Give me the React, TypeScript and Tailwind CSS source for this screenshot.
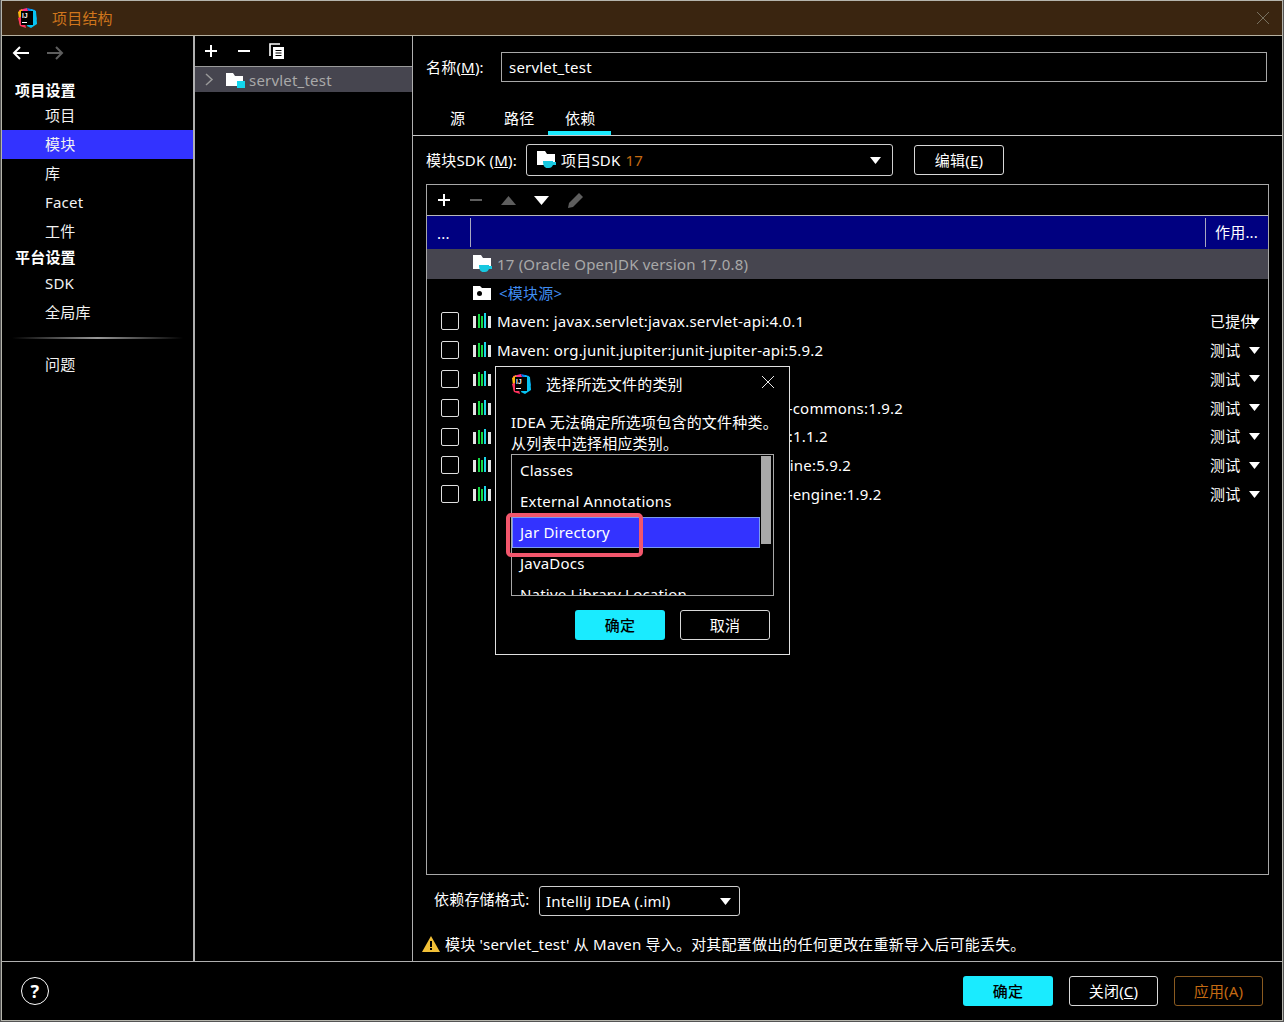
// App.tsx
import React from "react";

const Logo = ({ size = 20 }: { size?: number }) => (
  <svg width={size} height={size} viewBox="0 0 20 20" className="shrink-0">
    <polygon points="2,2 10,0 12,6 3,8" fill="#ff318c" />
    <polygon points="10,0 18,2 20,12 14,8" fill="#087cfa" />
    <polygon points="14,1 19,3 20,16 14,20 10,18" fill="#07c3f2" />
    <polygon points="1,4 5,1 7,10 3,18" fill="#fdb60d" />
    <polygon points="1,10 6,8 9,20 3,18" fill="#fe315d" />
    <rect x="4" y="3" width="12" height="14" fill="#000" />
    <text x="5" y="10" fontSize="6.5" fontWeight="700" fill="#fff" fontFamily="Liberation Sans">IJ</text>
    <rect x="5" y="14" width="5" height="1" fill="#fff" />
  </svg>
);

const SdkFolder = () => (
  <svg width="20" height="18" viewBox="0 0 20 18" className="shrink-0">
    <path d="M0 0h8l2 3h8v11H0z" fill="#fff" />
    <path d="M6 10h10v1h3v3h-3c-1 2-2 3-4 3h-2c-2 0-4-2-4-7z" fill="#18c8e0" />
  </svg>
);

const SourceFolder = () => (
  <svg width="18" height="14" viewBox="0 0 18 14" className="shrink-0">
    <path d="M0 0h7l2 2h9v12H0z" fill="#fff" />
    <circle cx="6.5" cy="7.5" r="2.5" fill="#000" />
  </svg>
);

const MavenIcon = () => (
  <svg width="19" height="16" viewBox="0 0 19 16" className="shrink-0">
    <rect x="0" y="3" width="3" height="12" fill="#e6e6e6" />
    <rect x="5" y="1" width="2" height="14" fill="#14d944" />
    <rect x="8" y="3" width="2" height="12" fill="#14d944" />
    <rect x="11" y="0" width="2" height="15" fill="#1ad6e8" />
    <rect x="15" y="3" width="3" height="12" fill="#e6e6e6" />
  </svg>
);

const Triangle = ({ color = "#fff", up = false }: { color?: string; up?: boolean }) => (
  <svg width="15" height="9" viewBox="0 0 15 9" className="shrink-0">
    <polygon points={up ? "7.5,0 15,9 0,9" : "0,0 15,0 7.5,9"} fill={color} />
  </svg>
);

const SmallArrow = () => (
  <svg width="11" height="7" viewBox="0 0 11 7" className="shrink-0">
    <polygon points="0,0 11,0 5.5,7" fill="#fff" />
  </svg>
);

const Plus = ({ color = "#fff" }: { color?: string }) => (
  <svg width="14" height="14" viewBox="0 0 14 14" className="shrink-0">
    <path d="M7 1v12M1 7h12" stroke={color} strokeWidth="2" />
  </svg>
);

const Minus = ({ color = "#fff" }: { color?: string }) => (
  <svg width="14" height="14" viewBox="0 0 14 14" className="shrink-0">
    <path d="M1 7h12" stroke={color} strokeWidth="2" />
  </svg>
);

const Arrow = ({ color, flip }: { color: string; flip?: boolean }) => (
  <svg width="18" height="14" viewBox="0 0 18 14" className={flip ? "shrink-0 rotate-180" : "shrink-0"}>
    <path d="M17 7H2M8 1 2 7l6 6" stroke={color} strokeWidth="2" fill="none" />
  </svg>
);

const deps = [
  { name: "Maven: javax.servlet:javax.servlet-api:4.0.1", scope: "已提供" },
  { name: "Maven: org.junit.jupiter:junit-jupiter-api:5.9.2", scope: "测试" },
  { name: "Maven: org.opentest4j:opentest4j:1.2.0", scope: "测试" },
  { name: "Maven: org.junit.platform:junit-platform-commons:1.9.2", scope: "测试" },
  { name: "Maven: org.apiguardian:apiguardian-api:1.1.2", scope: "测试" },
  { name: "Maven: org.junit.jupiter:junit-jupiter-engine:5.9.2", scope: "测试" },
  { name: "Maven: org.junit.platform:junit-platform-engine:1.9.2", scope: "测试" },
];

const NavItem = ({ label, active }: { label: string; active?: boolean }) => (
  <div className={`h-[29px] flex items-center pl-[43px] text-[#f2f2f2] ${active ? "bg-[#3333ff]" : ""}`}>{label}</div>
);

export default function App() {
  return (
    <div className="w-[1284px] h-[1022px] bg-[#555] overflow-hidden relative font-['Noto_Sans','Noto_Sans_CJK_SC',sans-serif] text-[15px] tracking-[0.2px] text-white">
      <div className="ml-px mr-[1px] mt-0 h-[1021px] border border-[#b5b5ad] bg-black flex flex-col">
        {/* title bar */}
        <div className="h-[34px] shrink-0 bg-[#3a2510] border-b border-[#b5b0a0] flex items-center pl-[15px] pr-[12px] box-content">
          <Logo />
          <span className="ml-[15px] text-[#d0761c]">项目结构</span>
          <svg width="14" height="14" viewBox="0 0 14 14" className="ml-auto">
            <path d="M1 1l12 12M13 1 1 13" stroke="#77705f" strokeWidth="1" />
          </svg>
        </div>

        <div className="flex-1 flex min-h-0">
          {/* sidebar */}
          <div className="w-[191px] shrink-0 border-r-2 border-[#b0b0b0] box-content">
            <div className="h-[34px] flex items-center gap-[16px] pl-[10px]">
              <Arrow color="#ffffff" />
              <Arrow color="#5e5e5e" flip />
            </div>
            <div className="h-[10px]" />
            <div className="h-[21px] flex items-center pl-[13px] font-bold">项目设置</div>
            <NavItem label="项目" />
            <NavItem label="模块" active />
            <NavItem label="库" />
            <NavItem label="Facet" />
            <NavItem label="工件" />
            <div className="h-[23px] flex items-center pl-[13px] font-bold">平台设置</div>
            <NavItem label="SDK" />
            <NavItem label="全局库" />
            <div className="h-[2px] mx-[10px] mt-[10px] mb-[11px] bg-gradient-to-r from-transparent via-[#999] to-transparent" />
            <NavItem label="问题" />
          </div>

          {/* module tree */}
          <div className="w-[217px] shrink-0 border-r border-[#b0b0b0] box-content">
            <div className="h-[30px] flex items-center gap-[19px] pl-[9px] border-b border-[#9a9a9a] box-content">
              <Plus />
              <Minus />
              <svg width="16" height="16" viewBox="0 0 16 16" className="shrink-0 ml-[-1px]">
                <path d="M1 13V1h10" stroke="#fff" strokeWidth="1.6" fill="none" />
                <path d="M4 4h11v12H4z" fill="#fff" />
                <path d="M6.5 7.5h6M6.5 10h6M6.5 12.500h6" stroke="#000" strokeWidth="1.2" />
              </svg>
            </div>
            <div className="h-[25px] bg-[#46454f] flex items-center pl-[10px]">
              <svg width="9" height="13" viewBox="0 0 9 13" className="shrink-0">
                <path d="M1 1l6 5.500-6 5.500" stroke="#9a9a9a" strokeWidth="1.500" fill="none" />
              </svg>
              <span className="ml-[12px] w-[18px] h-[16px] shrink-0">
                <svg width="19" height="16" viewBox="0 0 19 16">
                  <path d="M0 1h7l2 3h8v10H0z" fill="#fff" />
                  <rect x="11" y="9" width="8" height="7" fill="#12d6ee" />
                </svg>
              </span>
              <span className="ml-[5px] pt-[1px] text-[#a9a9a9]">servlet_test</span>
            </div>
          </div>

          {/* right panel */}
          <div className="flex-1 min-w-0 flex flex-col">
            <div className="h-[46px] shrink-0 flex items-center pl-[13px] pr-[15px] pt-[16px]">
              <span className="w-[75px] shrink-0">名称(<span className="underline">M</span>):</span>
              <div className="flex-1 h-[30px] border border-[#a8a8a8] flex items-center px-[7px]">servlet_test</div>
            </div>
            <div className="h-[54px] shrink-0 border-b border-[#c8c8c8] flex items-end pl-[37px]">
              <div className="w-[54px] h-[35px] pt-[7px]">源</div>
              <div className="w-[44px] h-[35px] pt-[7px]">路径</div>
              <div className="w-[63px] h-[35px] pt-[7px] pl-[17px] border-b-4 border-[#1aebff]">依赖</div>
            </div>
            <div className="h-[48px] shrink-0 flex items-center pl-[13px]">
              <span className="w-[100px] shrink-0 whitespace-nowrap">模块SDK (<span className="underline">M</span>):</span>
              <div className="w-[367px] h-[32px] border border-[#cfcfcf] rounded-[3px] flex items-center pl-[10px] pr-[11px]">
                <SdkFolder />
                <span className="ml-[4px]">项目SDK</span>
                <span className="ml-[5px] text-[#c46a12]">17</span>
                <span className="ml-auto"><SmallArrow /></span>
              </div>
              <div className="ml-[21px] w-[90px] h-[30px] border border-[#d8d8d8] rounded-[3px] flex items-center justify-center">
                <span>编辑(<span className="underline">E</span>)</span>
              </div>
            </div>

            {/* dependency table */}
            <div className="ml-[13px] mr-[13px] h-[691px] shrink-0 border border-[#a8a8a8] flex flex-col">
              <div className="h-[30px] shrink-0 flex items-center pl-[10px] gap-[18px]">
                <Plus />
                <Minus color="#5e5e5e" />
                <Triangle color="#5e5e5e" up />
                <Triangle />
                <svg width="18" height="18" viewBox="0 0 18 18" className="shrink-0">
                  <path d="M1 17l1-5L12 2l4 4L6 16z" fill="#5e5e5e" />
                </svg>
              </div>
              <div className="h-[34px] shrink-0 bg-[#000080] border-t border-[#b8b8b8] flex">
                <div className="w-[44px] flex items-end pb-[3px] pl-[10px] border-r border-[#a8a8c0] my-[2px]">...</div>
                <div className="flex-1" />
                <div className="w-[63px] pl-[9px] flex items-center border-l border-[#a8a8c0] my-[2px]">作用...</div>
              </div>
              <div className="h-[30px] shrink-0 bg-[#46454f] flex items-center pl-[46px] text-[#a9a9a9]">
                <SdkFolder />
                <span className="ml-[4px]">17 (Oracle OpenJDK version 17.0.8)</span>
              </div>
              <div className="h-[28px] shrink-0 flex items-center pl-[46px]">
                <SourceFolder />
                <span className="ml-[8px] text-[#3f8cf0]">&lt;模块源&gt;</span>
              </div>
              {deps.map((d) => (
                <div key={d.name} className="h-[28.8px] shrink-0 flex items-center pl-[14px] pr-[8px]">
                  <div className="w-[18px] h-[18px] border border-[#e0e0e0] rounded-[2px] shrink-0" />
                  <span className="ml-[14px]"><MavenIcon /></span>
                  <span className="ml-[5px] whitespace-nowrap">{d.name}</span>
                  <span className="ml-auto w-[39px] whitespace-nowrap">{d.scope}</span>
                  <span className="relative"><SmallArrow /></span>
                </div>
              ))}
            </div>

            <div className="h-[52px] shrink-0 flex items-center pl-[21px]">
              <span className="w-[105px] shrink-0 -mt-[3px] whitespace-nowrap">依赖存储格式:</span>
              <div className="w-[201px] h-[30px] border border-[#cfcfcf] rounded-[3px] flex items-center pl-[6px] pr-[8px]">
                <span>IntelliJ IDEA (.iml)</span>
                <span className="ml-auto"><SmallArrow /></span>
              </div>
            </div>
            <div className="flex-1 flex items-center pl-[9px] whitespace-nowrap">
              <svg width="18" height="16" viewBox="0 0 18 16" className="shrink-0">
                <polygon points="9,0 18,16 0,16" fill="#f2c037" />
                <rect x="8" y="5" width="2" height="6" fill="#000" />
                <rect x="8" y="12" width="2" height="2" fill="#000" />
              </svg>
              <span className="ml-[5px]">模块 'servlet_test' 从 Maven 导入。对其配置做出的任何更改在重新导入后可能丢失。</span>
            </div>
          </div>
        </div>

        {/* footer */}
        <div className="h-[59px] shrink-0 border-t border-[#b0b0b0] flex items-center pl-[19px] pr-[19px]">
          <div className="w-[28px] h-[28px] rounded-full border border-white flex items-center justify-center font-bold text-[18px]">?</div>
          <div className="ml-auto flex gap-[16px]">
            <div className="w-[90px] h-[30px] bg-[#1aebff] rounded-[3px] flex items-center justify-center text-black font-medium">确定</div>
            <div className="w-[89px] h-[30px] border border-[#d8d8d8] rounded-[3px] flex items-center justify-center">
              <span>关闭(<span className="underline">C</span>)</span>
            </div>
            <div className="w-[89px] h-[30px] border border-[#8a5a20] rounded-[3px] flex items-center justify-center text-[#c46a12]">应用(A)</div>
          </div>
        </div>
      </div>

      {/* file type dialog */}
      <div className="absolute left-[495px] top-[366px] w-[295px] h-[289px] bg-black border border-[#e0e0e0] flex flex-col px-[15px]">
        <div className="h-[34px] shrink-0 flex items-center">
          <Logo size={20} />
          <span className="ml-[15px]">选择所选文件的类别</span>
          <svg width="14" height="14" viewBox="0 0 14 14" className="ml-auto mr-[-1px] mb-[4px]">
            <path d="M1 1l12 12M13 1 1 13" stroke="#e8e8e8" strokeWidth="1" />
          </svg>
        </div>
        <div className="mt-[10px] leading-[22px] whitespace-nowrap">IDEA 无法确定所选项包含的文件种类。</div>
        <div className="leading-[21px] whitespace-nowrap">从列表中选择相应类别。</div>
        <div className="relative w-[263px] h-[142px] shrink-0 border border-[#a8a8a8]">
          <div className="w-[248px] h-full overflow-hidden">
            <div className="h-[31px] flex items-center pl-[8px]">Classes</div>
            <div className="h-[31px] flex items-center pl-[8px]">External Annotations</div>
            <div className="h-[31px] flex items-center pl-[7px] bg-[#3333ff] border border-[#7a9af0]">Jar Directory</div>
            <div className="h-[31px] flex items-center pl-[8px]">JavaDocs</div>
            <div className="h-[31px] flex items-center pl-[8px] whitespace-nowrap">Native Library Location</div>
          </div>
          <div className="absolute right-[2px] top-[1px] w-[10px] h-[88px] bg-[#a8a8a8]" />
          <div className="absolute left-[-6px] top-[58px] w-[137px] h-[44px] border-[4px] border-[#f2566c] rounded-[5px]" />
        </div>
        <div className="flex gap-[15px] pl-[64px] mt-[14px]">
          <div className="w-[90px] h-[30px] bg-[#1aebff] rounded-[3px] flex items-center justify-center text-black font-medium">确定</div>
          <div className="w-[90px] h-[30px] border border-[#d8d8d8] rounded-[3px] flex items-center justify-center">取消</div>
        </div>
      </div>
    </div>
  );
}
